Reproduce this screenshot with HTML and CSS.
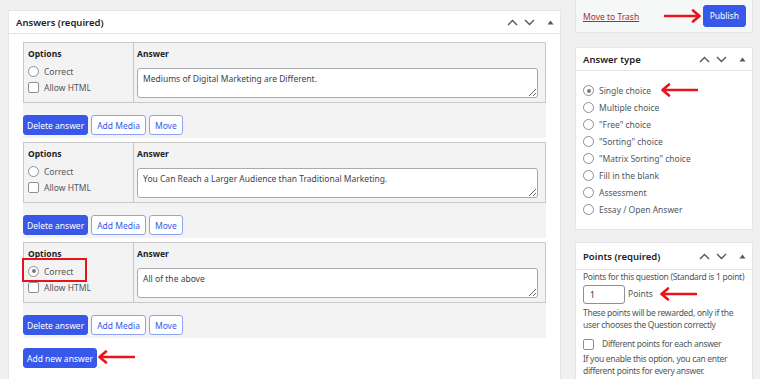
FILE: index.html
```html
<!DOCTYPE html>
<html lang="en">
<head>
    <meta charset="UTF-8">
    <meta name="viewport" content="width=device-width, initial-scale=1.0">
    <title>Edit Question</title>
    <link rel="stylesheet" href="styles.css">
</head>
<body>
    <div class="page">
        <div class="main">
            <div class="postbox">
                <div class="postbox-header">
                    <h2>Answers (required)</h2>
                    <div class="handles">
                        <svg width="11" height="7" viewBox="0 0 11 7"><path d="M1 6 L5.5 1.5 L10 6" fill="none" stroke="#50575e" stroke-width="1.4"/></svg>
                        <svg width="11" height="7" viewBox="0 0 11 7"><path d="M1 1 L5.5 5.5 L10 1" fill="none" stroke="#50575e" stroke-width="1.4"/></svg>
                        <svg width="7" height="5" viewBox="0 0 7 5"><path d="M0.5 4.5 L3.5 0.5 L6.5 4.5 Z" fill="#50575e"/></svg>
                    </div>
                </div>
                <div class="inside">
                    <div class="answer">
                        <div class="answer-table">
                            <div class="cell options">
                                <div class="th">Options</div>
                                <div class="opt"><span class="radio"></span>Correct</div>
                                <div class="opt"><span class="check"></span>Allow HTML</div>
                            </div>
                            <div class="cell">
                                <div class="th">Answer</div>
                                <textarea class="field" readonly>Mediums of Digital Marketing are Different.</textarea>
                            </div>
                        </div>
                        <div class="actions">
                            <button class="btn primary">Delete answer</button>
                            <button class="btn">Add Media</button>
                            <button class="btn">Move</button>
                        </div>
                    </div>

                    <div class="answer">
                        <div class="answer-table">
                            <div class="cell options">
                                <div class="th">Options</div>
                                <div class="opt"><span class="radio"></span>Correct</div>
                                <div class="opt"><span class="check"></span>Allow HTML</div>
                            </div>
                            <div class="cell">
                                <div class="th">Answer</div>
                                <textarea class="field" readonly>You Can Reach a Larger Audience than Traditional Marketing.</textarea>
                            </div>
                        </div>
                        <div class="actions">
                            <button class="btn primary">Delete answer</button>
                            <button class="btn">Add Media</button>
                            <button class="btn">Move</button>
                        </div>
                    </div>

                    <div class="answer">
                        <div class="answer-table">
                            <div class="cell options">
                                <div class="th">Options</div>
                                <div class="opt"><span class="radio checked"></span>Correct</div>
                                <div class="opt"><span class="check"></span>Allow HTML</div>
                            </div>
                            <div class="cell">
                                <div class="th">Answer</div>
                                <textarea class="field" readonly>All of the above</textarea>
                            </div>
                        </div>
                        <div class="actions">
                            <button class="btn primary">Delete answer</button>
                            <button class="btn">Add Media</button>
                            <button class="btn">Move</button>
                        </div>
                    </div>

                    <button class="btn primary add">Add new answer</button>
                </div>
            </div>
        </div>

        <div class="side">
            <div class="publish-box">
                <a class="trash" href="#">Move to Trash</a>
                <button class="btn primary publish">Publish</button>
            </div>

            <div class="postbox side-box type-box">
                <div class="postbox-header">
                    <h2>Answer type</h2>
                    <div class="handles">
                        <svg width="11" height="7" viewBox="0 0 11 7"><path d="M1 6 L5.5 1.5 L10 6" fill="none" stroke="#50575e" stroke-width="1.4"/></svg>
                        <svg width="11" height="7" viewBox="0 0 11 7"><path d="M1 1 L5.5 5.5 L10 1" fill="none" stroke="#50575e" stroke-width="1.4"/></svg>
                        <svg width="7" height="5" viewBox="0 0 7 5"><path d="M0.5 4.5 L3.5 0.5 L6.5 4.5 Z" fill="#50575e"/></svg>
                    </div>
                </div>
                <ul class="type-list">
                    <li><span class="radio checked"></span>Single choice</li>
                    <li><span class="radio"></span>Multiple choice</li>
                    <li><span class="radio"></span>"Free" choice</li>
                    <li><span class="radio"></span>"Sorting" choice</li>
                    <li><span class="radio"></span>"Matrix Sorting" choice</li>
                    <li><span class="radio"></span>Fill in the blank</li>
                    <li><span class="radio"></span>Assessment</li>
                    <li><span class="radio"></span>Essay / Open Answer</li>
                </ul>
            </div>

            <div class="postbox side-box points-box">
                <div class="postbox-header">
                    <h2>Points (required)</h2>
                    <div class="handles">
                        <svg width="11" height="7" viewBox="0 0 11 7"><path d="M1 6 L5.5 1.5 L10 6" fill="none" stroke="#50575e" stroke-width="1.4"/></svg>
                        <svg width="11" height="7" viewBox="0 0 11 7"><path d="M1 1 L5.5 5.5 L10 1" fill="none" stroke="#50575e" stroke-width="1.4"/></svg>
                        <svg width="7" height="5" viewBox="0 0 7 5"><path d="M0.5 4.5 L3.5 0.5 L6.5 4.5 Z" fill="#50575e"/></svg>
                    </div>
                </div>
                <div class="points-inside">
                    <p>Points for this question (Standard is 1 point)</p>
                    <div class="points-row"><span class="num">1</span>Points</div>
                    <p>These points will be rewarded, only if the<br>user chooses the Question correctly</p>
                    <div class="diff"><span class="check"></span>Different points for each answer</div>
                    <p>If you enable this option, you can enter<br>different points for every answer.</p>
                </div>
            </div>
        </div>
    </div>

    <!-- annotation marks over the screenshot -->
    <div class="mark-box"></div>
    <svg class="arrow arrow-publish" width="38" height="14" viewBox="0 0 38 14"><path d="M1 7 H35 M29 1.5 L35.5 7 L29 12.5" fill="none" stroke="#e8141b" stroke-width="2.6" stroke-linecap="round" stroke-linejoin="round"/></svg>
    <svg class="arrow arrow-type" width="38" height="14" viewBox="0 0 38 14"><path d="M37 7 H3 M9 1.5 L2.5 7 L9 12.5" fill="none" stroke="#e8141b" stroke-width="2.6" stroke-linecap="round" stroke-linejoin="round"/></svg>
    <svg class="arrow arrow-points" width="38" height="14" viewBox="0 0 38 14"><path d="M37 7 H3 M9 1.5 L2.5 7 L9 12.5" fill="none" stroke="#e8141b" stroke-width="2.6" stroke-linecap="round" stroke-linejoin="round"/></svg>
    <svg class="arrow arrow-add" width="38" height="14" viewBox="0 0 38 14"><path d="M37 7 H3 M9 1.5 L2.5 7 L9 12.5" fill="none" stroke="#e8141b" stroke-width="2.6" stroke-linecap="round" stroke-linejoin="round"/></svg>
</body>
</html>
```

FILE: styles.css
```css
body {
    margin: 0;
    background-color: #f0f0f1;
    font-family: "Noto Sans", "Open Sans", sans-serif;
    font-size: 8.5px;
    color: #50575e;
    overflow: hidden;
}

.page {
    display: flex;
    gap: 14px;
    padding-left: 8px;
    height: 379px;
    position: relative;
}

.main {
    width: 553px;
    padding-top: 10px;
}

.postbox {
    background-color: #fff;
    border: 1px solid #e6e6e8;
}

.postbox-header {
    display: flex;
    align-items: center;
    justify-content: space-between;
    height: 22px;
    border-bottom: 1px solid #e2e4e7;
    padding: 0 6px 0 7px;
}

.postbox-header h2 {
    margin: 0;
    font-size: 9.5px;
    font-weight: 600;
    color: #1d2327;
}

.handles {
    display: flex;
    align-items: center;
    gap: 6px;
}

.handles svg:last-child {
    margin-left: 6px;
}

.inside {
    padding: 8px 14px 12px 14px;
}

.answer {
    background-color: #f3f3f3;
    margin-bottom: 4px;
}

.answer-table {
    display: grid;
    grid-template-columns: 110px 1fr;
    border: 1px solid #c8c8c8;
    height: 59px;
}

.cell {
    padding: 4px 7px 0 3px;
}

.options {
    border-right: 1px solid #c8c8c8;
    padding-left: 4px;
}

.th {
    font-weight: 700;
    color: #1d2327;
    line-height: 13px;
    height: 13px;
}

.opt {
    display: flex;
    align-items: center;
    height: 16px;
}

.options .th {
    margin-bottom: 3px;
}

.radio {
    display: inline-block;
    width: 9px;
    height: 9px;
    border: 1px solid #8c8f94;
    border-radius: 50%;
    background-color: #fff;
    margin-right: 5px;
    position: relative;
    flex: none;
}

.radio.checked::after {
    content: "";
    position: absolute;
    left: 2.5px;
    top: 2.5px;
    width: 4px;
    height: 4px;
    border-radius: 50%;
    background-color: #787c82;
}

.check {
    display: inline-block;
    width: 9px;
    height: 9px;
    border: 1px solid #8c8f94;
    border-radius: 2px;
    background-color: #fff;
    margin-right: 5px;
    flex: none;
}

.field {
    display: block;
    box-sizing: border-box;
    width: 100%;
    height: 30px;
    margin-top: 8px;
    padding: 4px 5px;
    border: 1px solid #a7aaad;
    border-radius: 3px;
    font-family: "Noto Sans", "Open Sans", sans-serif;
    font-size: 8.5px;
    color: #3c434a;
    background-color: #fff;
    resize: vertical;
    outline: none;
}

.actions {
    display: flex;
    gap: 3px;
    padding: 12px 0 3px 0;
}

.btn {
    height: 20px;
    padding: 0 5px;
    font-family: "Noto Sans", "Open Sans", sans-serif;
    font-size: 8.5px;
    color: #3858e9;
    background-color: #fff;
    border: 1px solid #8fa2f2;
    border-radius: 3px;
}

.btn.primary {
    padding: 0 3px;
    color: #fff;
    background-color: #3858e9;
    border-color: #3858e9;
}

.add {
    margin-top: 6px;
}

.side {
    width: 178px;
    display: flex;
    flex-direction: column;
}

.publish-box {
    flex: none;
    display: flex;
    align-items: center;
    justify-content: space-between;
    height: 32px;
    padding: 0 6px 0 7px;
    background-color: #f6f7f7;
    border: 1px solid #e2e4e7;
    border-top: none;
}

.trash {
    color: #b32d2e;
    font-size: 8.5px;
}

.btn.publish {
    height: 22px;
    padding: 0 6px;
    margin-top: -1px;
}

.side-box {
    flex: none;
    margin-top: 14px;
}

.type-box {
    height: 181px;
}

.type-list {
    list-style: none;
    margin: 0;
    padding: 11px 7px 0 7px;
}

.type-list li {
    display: flex;
    align-items: center;
    height: 17px;
}

.points-box {
    margin-top: 12px;
    flex: 1 0 auto;
    border-bottom: none;
}

.points-box .postbox-header {
    height: 26px;
}

.points-inside {
    padding: 1px 3px 0 7px;
    line-height: 12.5px;
    letter-spacing: -0.3px;
    white-space: nowrap;
}

.points-inside p {
    margin: 0;
}

.points-row {
    display: flex;
    align-items: center;
    margin: 1px 0 3px 0;
    letter-spacing: 0;
}

.num {
    box-sizing: border-box;
    width: 42px;
    height: 19px;
    line-height: 17px;
    padding-left: 6px;
    border: 1px solid #8c8f94;
    border-radius: 3px;
    color: #2c3338;
    margin-right: 3px;
    background-color: #fff;
}

.diff {
    display: flex;
    align-items: center;
    height: 14px;
    margin: 6px 0 1px 0;
}

.diff .check {
    margin-right: 8px;
}

.mark-box {
    position: absolute;
    left: 22px;
    top: 258px;
    width: 61px;
    height: 20px;
    border: 2.5px solid #e8141b;
}

.arrow {
    position: absolute;
}

.arrow-publish {
    left: 664px;
    top: 9px;
}

.arrow-type {
    left: 660px;
    top: 83px;
}

.arrow-points {
    left: 659px;
    top: 287px;
}

.arrow-add {
    left: 97px;
    top: 350px;
}
```
